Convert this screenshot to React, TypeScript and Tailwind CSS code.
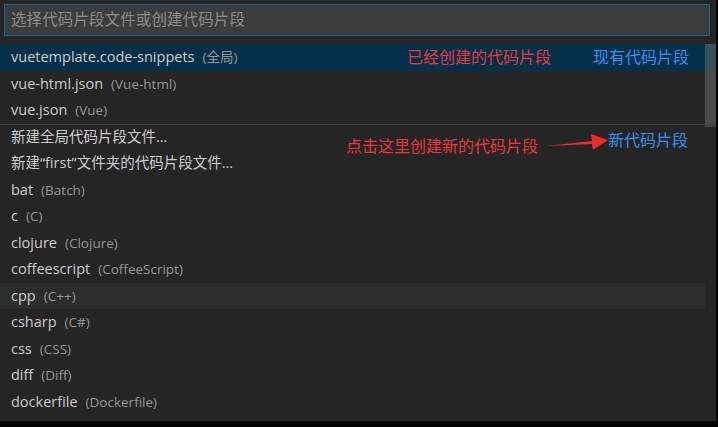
import React from "react";

type Item = { label: string; desc?: string };

const items: Item[] = [
  { label: "vuetemplate.code-snippets", desc: "(全局)" },
  { label: "vue-html.json", desc: "(Vue-html)" },
  { label: "vue.json", desc: "(Vue)" },
  { label: "新建全局代码片段文件..." },
  { label: "新建“first”文件夹的代码片段文件..." },
  { label: "bat", desc: "(Batch)" },
  { label: "c", desc: "(C)" },
  { label: "clojure", desc: "(Clojure)" },
  { label: "coffeescript", desc: "(CoffeeScript)" },
  { label: "cpp", desc: "(C++)" },
  { label: "csharp", desc: "(C#)" },
  { label: "css", desc: "(CSS)" },
  { label: "diff", desc: "(Diff)" },
  { label: "dockerfile", desc: "(Dockerfile)" },
];

const font = { fontFamily: '"Open Sans", "Noto Sans CJK SC", sans-serif' };

// red/blue notes drawn on the screenshot
function Notes({ index }: { index: number }) {
  if (index === 0) {
    return (
      <div className="ml-auto flex items-center gap-[42px] pr-[16px] text-[16px] leading-[22px]">
        <span className="text-[#e8383a]">已经创建的代码片段</span>
        <span className="text-[#3b8eea]">现有代码片段</span>
      </div>
    );
  }
  if (index === 3) {
    return (
      <div className="ml-auto self-start h-[25px] flex items-start pr-[17px] text-[16px] leading-[22px]">
        <span className="text-[#e8383a] mt-[10px]">点击这里创建新的代码片段</span>
        <svg className="mt-[7px] ml-[6px] -mr-[2px]" width="66" height="20" viewBox="0 0 66 20">
          <polygon points="2,14 48,9 47,2 64,8 49,18 48,12" fill="#ec2b2b" />
        </svg>
        <span className="text-[#3b8eea] mt-[4px]">新代码片段</span>
      </div>
    );
  }
  return null;
}

export default function App() {
  return (
    <div className="w-[718px] h-[427px] bg-black overflow-hidden" style={font}>
      <div className="w-[716px] h-[421px] bg-[#252526] pt-[4px]">
        {/* input */}
        <div className="mx-[4px] w-[706px] h-[32px] bg-[#3c3c3c] border border-[#0e639c] flex items-center px-[6px]">
          <span className="text-[15.5px] text-[#8b8b8b] tracking-[0.1px]">选择代码片段文件或创建代码片段</span>
        </div>

        {/* list + scrollbar */}
        <div className="mt-[8px] flex">
          <div className="flex-1 min-w-0">
            {items.map((it, i) => {
              const selected = i === 0;
              const hover = i === 9;
              return (
                <div
                  key={i}
                  className={`h-[26.5px] flex items-center pl-[11px] ${selected ? "bg-[#062f4a]" : hover ? "bg-[#2a2d2e]" : ""} ${i === 3 ? "border-t border-[#3f3f40]" : ""}`}
                >
                  <span className="text-[14.5px] text-[#cccccc] whitespace-nowrap">{it.label}</span>
                  {it.desc && <span className="ml-[8px] text-[13.5px] text-[#969696] whitespace-nowrap">{it.desc}</span>}
                  <Notes index={i} />
                </div>
              );
            })}
          </div>
          <div className="w-[11px] flex flex-col">
            <div className="h-[27px] bg-[#3a4e5c]" />
            <div className="h-[53px] bg-[#4a4a4a]" />
            <div className="h-[3px] bg-[#444445]" />
          </div>
        </div>
      </div>
    </div>
  );
}
